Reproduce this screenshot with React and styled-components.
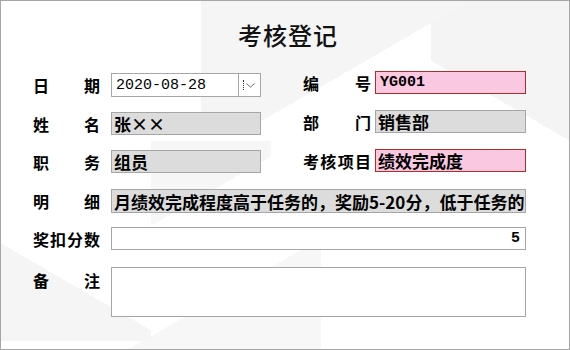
import React from "react"
import styled, { createGlobalStyle } from "styled-components"

const GlobalStyle = createGlobalStyle`
  html, body {
    margin: 0;
    padding: 0;
    background: #ffffff;
  }
  body {
    font-family: "Noto Sans CJK SC", "Noto Sans", sans-serif;
  }
`

const cjk = `"Noto Sans CJK SC", "Noto Sans", sans-serif`
const mono = `"Liberation Mono", "DejaVu Sans Mono", monospace`

const Window = styled.div`
  width: 570px;
  height: 350px;
  box-sizing: border-box;
  border: 1px solid #a6a6a6;
  padding: 0 43px 0 32px;
  display: flex;
  flex-direction: column;
  background-color: #ffffff;
  background-image:
    linear-gradient(150deg, #f5f5f5 0 55%, transparent 55%),
    linear-gradient(210deg, #f4f4f4 0 50%, transparent 50%),
    linear-gradient(30deg, #f5f5f5 0 45%, transparent 45%),
    linear-gradient(330deg, #f7f7f7 0 50%, transparent 50%),
    linear-gradient(90deg, #f7f7f7 0 100%),
    linear-gradient(150deg, #f6f6f6 0 50%, transparent 50%);
  background-size: 280px 120px, 140px 200px, 150px 130px, 200px 110px, 40px 60px, 120px 100px;
  background-position: 200px 0, 430px 0, 0 210px, 120px 240px, 470px 0, 150px 140px;
  background-repeat: no-repeat;
`

const Title = styled.h1`
  margin: 0 -43px 0 -32px;
  padding: 21px 0 0 6px;
  height: 70px;
  box-sizing: border-box;
  text-align: center;
  font-family: ${cjk};
  font-size: 24px;
  line-height: 26px;
  font-weight: 500;
  color: #111;
  letter-spacing: 1px;
`

const TopGrid = styled.div`
  display: flex;
  justify-content: space-between;
`

const Column = styled.div`
  display: flex;
  flex-direction: column;
  gap: ${(p) => p.$gap}px;
  padding-top: ${(p) => p.$offset || 0}px;
`

const Field = styled.div`
  display: flex;
  align-items: ${(p) => (p.$top ? "flex-start" : "center")};
  gap: ${(p) => p.$gap}px;
`

const Label = styled.div`
  width: ${(p) => p.$width}px;
  flex: none;
  display: flex;
  justify-content: space-between;
  font-family: ${cjk};
  font-size: 16px;
  font-weight: 700;
  line-height: 20px;
  color: #000;
  padding-top: ${(p) => p.$padTop || 0}px;
`

const variants = {
  plain: { bg: "#ffffff", border: "#a6a6a6" },
  grey: { bg: "#dcdcdc", border: "#a6a6a6" },
  pink: { bg: "#fbc8e2", border: "#b52a2a" },
}

const Box = styled.div`
  box-sizing: border-box;
  width: ${(p) => (p.$width ? `${p.$width}px` : "auto")};
  flex: ${(p) => (p.$width ? "none" : "1")};
  height: ${(p) => p.$height}px;
  background: ${(p) => variants[p.$variant].bg};
  border: 1px solid ${(p) => variants[p.$variant].border};
  display: flex;
  align-items: center;
  justify-content: ${(p) => (p.$right ? "flex-end" : "flex-start")};
  padding: 0 ${(p) => (p.$right ? 5 : 2)}px 0 2px;
  overflow: hidden;
  white-space: nowrap;
  font-family: ${cjk};
  font-size: 17px;
  font-weight: 700;
  color: #000;
`

const MonoText = styled.span`
  font-family: ${mono};
  font-size: 15px;
  font-weight: ${(p) => (p.$bold ? 700 : 400)};
  padding-left: 2px;
`

const DateText = styled.span`
  flex: 1;
  font-family: ${mono};
  font-size: 15px;
  font-weight: 400;
  padding-left: 2px;
`

const DropButton = styled.div`
  align-self: stretch;
  width: 22px;
  margin-right: -2px;
  border-left: 1px solid #a6a6a6;
  display: flex;
  align-items: center;
  gap: 2px;
  padding-left: 4px;
  box-sizing: border-box;
`

const FocusDots = styled.span`
  width: 0;
  height: 10px;
  border-left: 1px dotted #333;
`

const Rows = styled.div`
  display: flex;
  flex-direction: column;
  margin-top: 16px;
`

const Row = styled(Field)`
  margin-top: ${(p) => p.$mt || 0}px;
`

function Chars({ text }) {
  return text.split("").map((c, i) => <span key={i}>{c}</span>)
}

export default function App() {
  return (
    <>
      <GlobalStyle />
      <Window>
        <Title>考核登记</Title>
        <TopGrid>
          <Column $gap={15} $offset={2}>
            <Field $gap={11}>
              <Label $width={67}><Chars text="日期" /></Label>
              <Box $variant="plain" $width={150} $height={24}>
                <DateText>2020-08-28</DateText>
                <DropButton>
                  <FocusDots />
                  <svg width="9" height="5" viewBox="0 0 9 5">
                    <path d="M0.5 0.5 L4.5 4.2 L8.5 0.5" fill="none" stroke="#6a6a6a" strokeWidth="1" />
                  </svg>
                </DropButton>
              </Box>
            </Field>
            <Field $gap={11}>
              <Label $width={67}><Chars text="姓名" /></Label>
              <Box $variant="grey" $width={150} $height={23}>张××</Box>
            </Field>
            <Field $gap={11}>
              <Label $width={67}><Chars text="职务" /></Label>
              <Box $variant="grey" $width={150} $height={23}>组员</Box>
            </Field>
          </Column>
          <Column $gap={16}>
            <Field $gap={4}>
              <Label $width={68}><Chars text="编号" /></Label>
              <Box $variant="pink" $width={151} $height={23}>
                <MonoText $bold>YG001</MonoText>
              </Box>
            </Field>
            <Field $gap={4}>
              <Label $width={68}><Chars text="部门" /></Label>
              <Box $variant="grey" $width={151} $height={23}>销售部</Box>
            </Field>
            <Field $gap={4}>
              <Label $width={68}><Chars text="考核项目" /></Label>
              <Box $variant="pink" $width={151} $height={23}>绩效完成度</Box>
            </Field>
          </Column>
        </TopGrid>
        <Rows>
          <Row $gap={11}>
            <Label $width={67}><Chars text="明细" /></Label>
            <Box $variant="grey" $height={24}>
              月绩效完成程度高于任务的，奖励5-20分，低于任务的
            </Box>
          </Row>
          <Row $gap={11} $mt={14}>
            <Label $width={67}><Chars text="奖扣分数" /></Label>
            <Box $variant="plain" $height={23} $right>
              <MonoText $bold>5</MonoText>
            </Box>
          </Row>
          <Row $gap={11} $mt={17} $top>
            <Label $width={67} $padTop={3}><Chars text="备注" /></Label>
            <Box $variant="plain" $height={50} />
          </Row>
        </Rows>
      </Window>
    </>
  )
}
